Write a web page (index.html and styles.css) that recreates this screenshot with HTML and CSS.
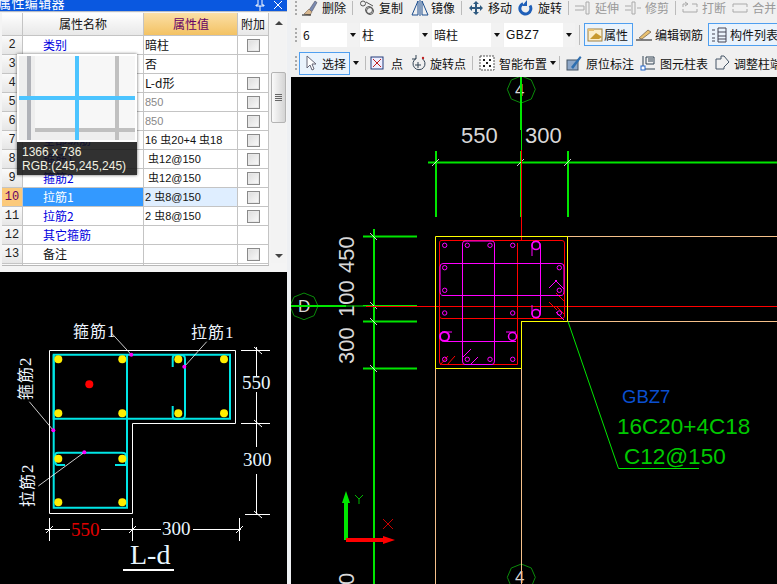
FILE: index.html
```html
<!DOCTYPE html>
<html lang="zh">
<head>
<meta charset="utf-8">
<title>属性编辑器</title>
<link rel="stylesheet" href="styles.css">
</head>
<body>
<div class="app">
  <aside class="left">
    <div class="titlebar"><span class="title">属性编辑器</span><span class="tb-icons"><svg width="10" height="11" viewBox="0 0 10 11"><path d="M3 0v5H1v1h8V5H7V0M5 6v5" fill="none" stroke="#fff"/></svg><svg width="10" height="10" viewBox="0 0 10 10"><path d="M1 1l8 8M9 1l-8 8" stroke="#fff" fill="none"/></svg></span></div>
    <div class="props">
      <div class="grid">
        <div class="row head"><div class="c num"></div><div class="c name center">属性名称</div><div class="c val hl">属性值</div><div class="c add center">附加</div></div>
        <div class="row"><div class="c num">2</div><div class="c name link">类别</div><div class="c val">暗柱</div><div class="c add"><i class="chk"></i></div></div>
        <div class="row"><div class="c num">3</div><div class="c name link">是否边缘构件</div><div class="c val">否</div><div class="c add"></div></div>
        <div class="row"><div class="c num">4</div><div class="c name link">截面形状</div><div class="c val">L-d形</div><div class="c add"><i class="chk"></i></div></div>
        <div class="row"><div class="c num">5</div><div class="c name link">截面宽</div><div class="c val mono dim">850</div><div class="c add"><i class="chk"></i></div></div>
        <div class="row"><div class="c num">6</div><div class="c name link">截面高</div><div class="c val mono dim">850</div><div class="c add"><i class="chk"></i></div></div>
        <div class="row"><div class="c num">7</div><div class="c name link">全部纵筋</div><div class="c val mono">16 虫20+4 虫18</div><div class="c add"><i class="chk"></i></div></div>
        <div class="row"><div class="c num">8</div><div class="c name link">箍筋1</div><div class="c val mono">&nbsp;虫12@150</div><div class="c add"><i class="chk"></i></div></div>
        <div class="row"><div class="c num">9</div><div class="c name link">箍筋2</div><div class="c val mono">&nbsp;虫12@150</div><div class="c add"><i class="chk"></i></div></div>
        <div class="row sel"><div class="c num">10</div><div class="c name">拉筋1</div><div class="c val mono">2 虫8@150</div><div class="c add"><i class="chk"></i></div></div>
        <div class="row"><div class="c num">11</div><div class="c name link">拉筋2</div><div class="c val mono">2 虫8@150</div><div class="c add"><i class="chk"></i></div></div>
        <div class="row"><div class="c num">12</div><div class="c name link">其它箍筋</div><div class="c val"></div><div class="c add"></div></div>
        <div class="row"><div class="c num">13</div><div class="c name">备注</div><div class="c val"></div><div class="c add"><i class="chk"></i></div></div>
        <div class="row stub"><div class="c num"></div><div class="c name"></div><div class="c val"></div><div class="c add"></div></div>
      </div>
      <div class="scroll">
        <svg class="sb-arrow" width="8" height="5" viewBox="0 0 8 5"><path d="M4 1l4 4H0z" fill="#444"/></svg>
        <div class="thumb"><span></span><span></span><span></span><span></span></div>
        <svg class="sb-arrow end" width="8" height="5" viewBox="0 0 8 5"><path d="M0 0h8L4 4z" fill="#444"/></svg>
      </div>
      <div class="tip">
        <svg class="tip-img" width="120" height="88" viewBox="0 0 120 88">
          <rect width="120" height="88" fill="#fff"/>
          <rect x="2" y="2" width="116" height="84" fill="#eee"/>
          <rect x="18" y="2" width="100" height="74" fill="#f7f7f7"/>
          <rect x="10" y="2" width="4" height="84" fill="#b0b2b8"/>
          <rect x="98" y="2" width="4" height="84" fill="#c0c0c0"/>
          <rect x="18" y="74" width="100" height="4" fill="#c0c0c0"/>
          <rect x="58" y="2" width="4" height="84" fill="#4cc4ff"/>
          <rect x="2" y="42" width="116" height="4" fill="#4cc4ff"/>
        </svg>
        <div class="tip-txt"><div>1366 x 736</div><div>RGB:(245,245,245)</div></div>
      </div>
    </div>
    <div class="preview">
      <svg class="fill" viewBox="0 272 287 312" width="287" height="312">
        <path d="M49.5 350.5H235.5V423.5H132.5V513.5H49.5Z" fill="none" stroke="#fff"/>
        <g fill="none" stroke="#00e6e6" stroke-width="2">
          <path d="M53.7 354.7H230V418.7H53.7Z"/>
          <path d="M53.7 354.7V507.7H127V354.7"/>
          <path d="M172.7 367V358Q172.7 355 176 355H181Q185 355 185 359V415Q185 419 181 419H176Q172.7 419 172.7 416V406"/>
          <path d="M65 465H58Q55 465 55 460V456Q55 452.7 58 452.7H122Q126 452.7 126 456V465H115"/>
        </g>
        <g fill="#ffee00">
          <circle cx="58.3" cy="359.3" r="4"/><circle cx="122.3" cy="359.3" r="4"/><circle cx="178.3" cy="359.3" r="4"/><circle cx="224" cy="359.3" r="4"/>
          <circle cx="58.3" cy="413.3" r="4"/><circle cx="122.3" cy="413.3" r="4"/><circle cx="178.3" cy="413.3" r="4"/><circle cx="224" cy="413.3" r="4"/>
          <circle cx="58.3" cy="458.7" r="4"/><circle cx="122.3" cy="458.7" r="4"/><circle cx="58.3" cy="502.3" r="4"/><circle cx="122.3" cy="502.3" r="4"/>
        </g>
        <circle cx="89.3" cy="384.3" r="4" fill="#f00"/>
        <g stroke="#fff" fill="none">
          <path d="M111.7 333.3L131.3 354.7M206.7 341.7L184.3 366.7M29.3 401.7L53.3 430.3M38.3 486L84.3 452.3" stroke-width=".8"/>
          <path d="M241 350.5H270M241 423.5H270M245 514.5H270M256.5 347V376M256.5 392V447M256.5 474V515"/>
          <path d="M45 529.5H70M101 529.5H161M193 529.5H241M49.5 518V541M132.5 518V541M239.5 518V541"/>
          <path d="M254 347l8 7M254 420l8 7M254 511l8 7M46 533l7-7M129 533l7-7M236 533l7-7"/>
        </g>
        <g fill="#ff00ff"><circle cx="131.3" cy="354.7" r="2"/><circle cx="184.3" cy="366.7" r="2"/><circle cx="53.3" cy="430.3" r="2"/><circle cx="84.3" cy="452.3" r="2"/></g>
        <g class="cad-label">
          <text x="73" y="337">箍筋<tspan class="lat">1</tspan></text>
          <text x="191" y="338">拉筋<tspan class="lat">1</tspan></text>
          <text transform="translate(31 400) rotate(-90)">箍筋<tspan class="lat">2</tspan></text>
          <text transform="translate(33 507) rotate(-90)">拉筋<tspan class="lat">2</tspan></text>
        </g>
        <g class="cad-num">
          <text x="242" y="389">550</text>
          <text x="243" y="466">300</text>
          <text x="71" y="536" class="red">550</text>
          <text x="162" y="535">300</text>
        </g>
        <text x="130" y="564" class="cad-title">L-d</text>
        <rect x="123" y="569" width="51" height="2" fill="#fff"/>
      </svg>
    </div>
  </aside>
  <div class="split"></div>
  <main class="right">
    <div class="bars">
      <div class="bar b1">
        <i class="grip"></i>
        <span class="tool"><svg class="ic" viewBox="0 0 16 16"><path d="M7 10l6-9 2 1.500-5 9z" fill="#7a8ab0" stroke="#445" stroke-width=".5"/><path d="M2 14l5-5 3 3-2 3z" fill="#d8b890" stroke="#654" stroke-width=".5"/><path d="M0 15h9" stroke="#111"/></svg>删除</span><i class="sep"></i>
        <span class="tool"><svg class="ic" viewBox="0 0 16 16" fill="none" stroke="#555"><circle cx="4" cy="3.500" r="2.500"/><circle cx="11" cy="11" r="3.500"/><circle cx="10" cy="10" r="3.500"/><path d="M7 2l7 4"/></svg>复制</span>
        <span class="tool mir"><svg class="ic wide" viewBox="0 0 18 16" fill="none" stroke="#1b4d8e"><path d="M7 15H1L7 1zM11 15h6L11 1zM9 0v16"/></svg>镜像</span><i class="sep"></i>
        <span class="tool"><svg class="ic" viewBox="0 0 16 16" fill="#2f5a80"><path d="M8 1l3 3H9v3h3V5l3 3-3 3V9H9v3h2l-3 3-3-3h2V9H4v2L1 8l3-3v2h3V4H5z"/></svg>移动</span>
        <span class="tool"><svg class="ic" viewBox="0 0 16 16" fill="none" stroke="#1f5fb8" stroke-width="3"><path d="M5 3.500a5.500 5.500 0 1 0 7 2"/><path d="M9 0v6H4z" fill="#1f5fb8" stroke="none"/></svg>旋转</span><i class="sep"></i>
        <span class="tool off"><svg class="ic" viewBox="0 0 16 16" fill="none" stroke="#aaa"><path d="M0 6h9M0 10h9v-4M11 2v12h3V2z"/></svg>延伸</span>
        <span class="tool off"><svg class="ic" viewBox="0 0 16 16" fill="none" stroke="#aaa"><path d="M0 6h6M0 10h6M7 2v12h3V2zM12 8h4"/></svg>修剪</span><i class="sep"></i>
        <span class="tool off"><svg class="ic" viewBox="0 0 16 16" fill="none" stroke="#aaa"><path d="M1 7V4h5M10 4h5v3M3 2l3 2-3 2M1 12h14v-3M1 12V9"/></svg>打断</span>
        <span class="tool off"><svg class="ic" viewBox="0 0 16 16" fill="none" stroke="#aaa"><path d="M1 7V4h14v3M1 12h14v-3M1 12V9"/></svg>合并</span>
      </div>
      <div class="bar b2">
        <i class="grip"></i>
        <span class="combo w58"><span>6</span><b class="drop"></b></span>
        <span class="combo"><span>柱</span><b class="drop"></b></span>
        <span class="combo"><span>暗柱</span><b class="drop"></b></span>
        <span class="combo"><span class="latin">GBZ7</span><b class="drop"></b></span>
        <i class="sep tall"></i>
        <span class="tool active attr"><svg class="ic" viewBox="0 0 16 16"><rect x="1" y="2" width="14" height="12" fill="#fbeecb" stroke="#a08040"/><path d="M3 12l6-6 6 4-3 2z" fill="#c89a30"/><path d="M1 2h6v2H1z" fill="#e8c070"/></svg>属性</span>
        <span class="tool"><svg class="ic" viewBox="0 0 16 16"><path d="M3 11l9-8 3 2-9 7z" fill="#e8c070" stroke="#543" stroke-width=".6"/><path d="M0 13h16" stroke="#111"/></svg>编辑钢筋</span>
        <span class="tool active list"><svg class="ic" viewBox="0 0 16 16" fill="none" stroke="#445"><path d="M1 3h3M1 7h3M1 11h3M1 14h3M7 1h8v14H7zM7 5h8M7 9h8M7 12h8"/></svg>构件列表</span>
      </div>
      <div class="bar b3">
        <i class="grip"></i>
        <span class="tool active pick"><svg class="ic" viewBox="0 0 16 16"><path d="M4 1v12l3-3 2 5 2-1-2-5h4z" fill="#fff" stroke="#667"/></svg>选择</span><b class="drop small"></b><i class="sep"></i>
        <span class="tool dot"><svg class="ic" viewBox="0 0 16 16"><rect x="2" y="2" width="12" height="12" fill="#eef" stroke="#223a7a"/><path d="M4 4l8 8M12 4l-8 8" stroke="#c02020"/></svg>点</span>
        <span class="tool"><svg class="ic" viewBox="0 0 16 16" fill="none" stroke="#345"><path d="M6 3.500a6 6 0 1 0 6 0M6 0v4H2M5 10h6M8 7v6"/><circle cx="13" cy="3" r="1.200" fill="#c02020" stroke="none"/></svg>旋转点</span><i class="sep"></i>
        <span class="tool"><svg class="ic" viewBox="0 0 16 16"><rect x="1" y="1" width="14" height="14" fill="#fff" stroke="#555" stroke-dasharray="2 1"/><path d="M4 4h2v2H4zM10 4h2v2h-2zM7 7h2v2H7zM4 10h2v2H4zM10 10h2v2h-2z" fill="#222"/></svg>智能布置<b class="drop small in"></b></span><i class="sep tight"></i>
        <span class="tool"><svg class="ic" viewBox="0 0 16 16"><rect x="1" y="5" width="11" height="10" fill="#8fa8c8" stroke="#456"/><path d="M5 12L14 1l1.500 1.500L7 14z" fill="#2f6fb0"/></svg>原位标注</span>
        <span class="tool"><svg class="ic" viewBox="0 0 16 16" fill="none" stroke="#345"><path d="M3 1v13h12M6 2h8v7H6zM8 4h5M8 6h5"/><rect x="1" y="11" width="4" height="4" fill="#fff" stroke="#2266cc"/></svg>图元柱表</span>
        <span class="tool"><svg class="ic" viewBox="0 0 16 16" fill="none" stroke="#456"><path d="M2 4h5V1h3l5 6-5 5v2H2z"/></svg>调整柱端</span>
      </div>
    </div>
    <div class="canvas">
      <svg class="fill" viewBox="291 77 486 507" width="486" height="507">
        <g fill="none" stroke="#0a8a0a" class="axis-ring">
          <path d="M521.3 76l10 4 4 9.300-4 9.700-10 4-10-4-4-9.700 4-9.300z"/>
          <path d="M304 293l10 4 4 9-4 9.700-10 4-10-4-4-9.700 4-9z"/>
          <path d="M521.300 564l10 4 4 9.300-4 9.700h-20l-4-9.700 4-9.300z"/>
        </g>
        <g class="cad-grey">
          <text x="515" y="96" class="t18">4</text>
          <text x="298" y="312" class="t18">D</text>
          <text x="515" y="583" class="t18">4</text>
          <text x="461" y="143">550</text>
          <text x="525" y="143">300</text>
          <text transform="translate(354 273) rotate(-90)">450</text>
          <text transform="translate(354 317) rotate(-90)">100</text>
          <text transform="translate(354 364) rotate(-90)">300</text>
          <text transform="translate(354 585) rotate(-90)">0</text>
        </g>
        <g fill="none" stroke="#00e600" stroke-width="2">
          <path d="M521 77V130M436 151V217M521 151V217M568 151V217M428 162.500H777"/>
          <path d="M374 229V584M363 236.500H417M363 321.500H417M363 368.500H417M291 306H346"/>
        </g>
        <path d="M521.500 130V150M346 306H366M363 305.500H417" fill="none" stroke="#00e600"/>
        <g stroke="#fff" fill="none" stroke-width=".8"><path d="M432 166l7-7M517 166l7-7M564 166l7-7M370 233l7 7M370 302l7 7M370 318l7 7M370 365l7 7"/></g>
        <path d="M521.500 150V240M366 306.500H777" fill="none" stroke="#f00"/>
        <path d="M567 236.500H777M567 321.500H777M435.500 368V584M521.500 321V584" fill="none" stroke="#f5c08a"/>
        <path d="M435.500 236.500H567.500V321.500H521.500V368.500H435.500Z" fill="none" stroke="#ffff00"/>
        <g fill="none" stroke="#f00">
          <path d="M441 240.500H562Q564.500 240.500 564.500 243V316Q564.500 318.500 562 318.500H442Q439.500 318.500 439.500 316V243Q439.500 240.500 441 240.500Z"/>
          <path d="M439.500 243V362Q439.500 364.500 442 364.500H517.500V243"/>
          <path d="M440 365l8-9M447 365l8-9M549 302l8 8M556 293l9 9M556 306l8 8"/>
        </g>
        <g fill="none" stroke="#f0f">
          <path d="M443 263.500H561Q564 263.500 564 267V291Q564 295.500 561 295.500H443Q440 295.500 440 291V267Q440 263.500 443 263.500Z"/>
          <path d="M465 241H492Q494.500 241 494.500 244V361Q494.500 364.500 492 364.500H465Q462.500 364.500 462.500 361V244Q462.500 241 465 241Z"/>
          <path d="M532 256V244Q532 241 536 241Q540.500 241 540.500 246V312Q540.500 318 536 318Q532 318 532 314V305" />
          <path d="M445 341.500H516M442 332H452M506 332H516"/>
          <path d="M549 288l8-8M555 280l9 9M463 357l8-8M471 364l7-7M556 312l8 8"/>
          <g>
            <circle cx="444.700" cy="245.300" r="2.200"/><circle cx="467.300" cy="245.300" r="2.200"/><circle cx="490" cy="245.300" r="2.200"/><circle cx="512.700" cy="245.300" r="2.200"/>
            <circle cx="444.700" cy="267.700" r="2.200"/><circle cx="559.300" cy="267.700" r="2.200"/><circle cx="444.700" cy="290.300" r="2.200"/><circle cx="559.300" cy="290.300" r="2.200"/>
            <circle cx="444.700" cy="313" r="2.200"/><circle cx="512.700" cy="313" r="2.200"/><circle cx="559.300" cy="313" r="2.200"/>
            <circle cx="444.700" cy="359.300" r="2.200"/><circle cx="467.300" cy="359.300" r="2.200"/><circle cx="490" cy="359.300" r="2.200"/><circle cx="512.700" cy="359.300" r="2.200"/>
            <circle cx="536" cy="245.500" r="4" stroke-width="1.600"/><circle cx="536" cy="313.500" r="4" stroke-width="1.600"/>
            <circle cx="444.500" cy="336.500" r="4.500" stroke-width="2"/><circle cx="512.500" cy="336.500" r="4" stroke-width="1.500"/>
          </g>
        </g>
        <path d="M568 321.500L618.500 468.500H699" fill="none" stroke="#00e600"/>
        <text x="622" y="403" class="lbl-blue">GBZ7</text>
        <text x="617" y="434" class="lbl-green">16C20+4C18</text>
        <text x="624" y="464" class="lbl-green">C12@150</text>
        <path d="M346 540V498" stroke="#00e600" stroke-width="4" fill="none"/>
        <path d="M346 491l4 12h-8z" fill="#00e600"/>
        <path d="M346 540H385" stroke="#f00" stroke-width="4" fill="none"/>
        <path d="M395 540l-12-4v8z" fill="#f00"/>
        <path d="M355 495l4 4 4-4M359 499v5" fill="none" stroke="#00e600" stroke-width=".8"/>
        <path d="M383 519l10 10M393 519l-10 10" fill="none" stroke="#f00" stroke-width=".8"/>
      </svg>
    </div>
  </main>
</div>
</body>
</html>
```
FILE: styles.css
```css
* { box-sizing: border-box; }
html, body { margin: 0; padding: 0; width: 777px; height: 584px; overflow: hidden; background: #f0f0f0; }
body { font: 12px "Noto Sans CJK SC", "Noto Sans", sans-serif; color: #111; }
.app { display: flex; width: 777px; height: 584px; }
.left { width: 287px; flex: none; display: flex; flex-direction: column; background: #fff; }
.split { width: 4px; flex: none; background: #eef0f3; }
.right { flex: 1; min-width: 0; display: flex; flex-direction: column; }
.fill { display: block; }

.titlebar { height: 11px; flex: none; background: #0a58e0; color: #fff; display: flex; justify-content: space-between; overflow: hidden; }
.title { font-size: 13px; line-height: 11px; margin-top: -3px; letter-spacing: .4px; margin-left: -2px; height: 14px; }
.tb-icons { display: flex; gap: 8px; padding-right: 4px; }
.props { position: relative; height: 261px; flex: none; border-top: 1px solid #b8bcc4; background: #f4f4f4; display: flex; padding: 1px 1px 0 2px; overflow: hidden; }
.grid { width: 267px; height: 253px; flex: none; background: #fff; overflow: hidden; border-bottom: 1px solid #b8b8b8; }
.row { display: flex; height: 19px; border-bottom: 1px solid #c4c4c4; line-height: 18px; font-size: 12px; }
.row.head { height: 23px; line-height: 22px; font-size: 12px; }
.row.stub { height: 3px; border: 0; }
.c { border-right: 1px solid #c4c4c4; overflow: hidden; white-space: nowrap; flex: none; }
.num { width: 21px; background: linear-gradient(#fafafa, #e6e6e6); text-align: center; font-family: "Liberation Mono", monospace; color: #222; }
.name { width: 121px; padding-left: 20px; }
.val { width: 94px; padding-left: 1px; }
.add { width: 31px; display: flex; align-items: center; justify-content: center; }
.center { text-align: center; padding-left: 0; justify-content: center; }
.head .c { background: linear-gradient(#fff, #e8e8e8); }
.head .hl { background: linear-gradient(#fbdfa6, #f3c263); color: #660066; text-align: center; }
.head .num { background: linear-gradient(#fff, #e8e8e8); }
.link { color: #0000e0; }
.mono { font-family: "Liberation Sans", "Noto Sans CJK SC", sans-serif; font-size: 11px; }
.dim { color: #888; }
.chk { display: block; width: 13px; height: 13px; border: 1px solid #8a8a8a; background: linear-gradient(135deg, #dcdcdc, #fafafa); box-shadow: inset 0 0 0 1px #e8e8e8; }
.sel .num { background: #fbc97a; color: #660066; }
.sel .name { background: #3399ff; color: #fff; }
.sel .val { background: #dfeeff; }

.scroll { width: 16px; margin-left: 2px; height: 250px; display: flex; flex-direction: column; align-items: center; padding: 7px 0 4px; background: #f3f3f3; }
.sb-arrow { flex: none; }
.sb-arrow.end { margin-top: auto; }
.thumb { width: 15px; height: 51px; flex: none; margin-top: 47px; border: 1px solid #b4b4b4; border-radius: 2px; background: linear-gradient(90deg, #fafafa, #d4d4d4); display: flex; flex-direction: column; align-items: center; justify-content: center; gap: 1px; }
.thumb span { display: block; width: 7px; height: 1px; background: #666; }

.tip { position: absolute; left: 17px; top: 42px; width: 120px; height: 121px; box-shadow: 0 0 3px rgba(0,0,0,.6); }
.tip-img { display: block; }
.tip-txt { height: 33px; background: rgba(20,20,20,.88); color: #f0f0e0; font: 12px/14px "Liberation Sans", sans-serif; padding: 3px 0 0 5px; }

.preview { flex: 1; margin-top: -1px; border-top: 1px solid #fff; background: #000; overflow: hidden; }
.cad-label text { font: 16px "Noto Sans CJK SC", sans-serif; fill: #eef6ff; letter-spacing: 1px; }
.cad-label .lat { font-family: "Liberation Serif", serif; font-size: 17px; }
.cad-num text { font: 19px "Liberation Serif", serif; fill: #e8f6ff; }
.cad-num .red { fill: #e00000; }
.cad-title { font: 28px "Liberation Serif", serif; fill: #e8f6ff; }

.bars { height: 77px; flex: none; background: #f0f0f0; display: flex; flex-direction: column; overflow: hidden; }
.bar { display: flex; align-items: center; gap: 7px; white-space: nowrap; padding-left: 4px; color: #111; flex: none; }
.b1 { height: 15px; margin-bottom: 7px; gap: 6px; }
.b2 { height: 25px; margin-bottom: 4px; gap: 1px; padding-left: 4px; }
.b3 { height: 24px; gap: 6px; padding-left: 4px; }
.grip { width: 2px; height: 14px; border-left: 2px dotted #aaa; flex: none; }
.b1 .grip { margin-right: -1px; }
.b2 .grip { margin-right: 3px; }
.b3 .grip { margin-right: -4px; }
.tool { display: inline-flex; align-items: center; gap: 4px; flex: none; height: 100%; }
.tool.off { color: #999; }
.mir { gap: 2px; margin-left: 2px; }
.ic { width: 16px; height: 16px; flex: none; }
.ic.wide { width: 18px; }
.sep { width: 1px; height: 14px; background: #bbb; flex: none; }
.sep.tall { height: 20px; margin: 0 3px; }
.sep.tight { margin-left: -3px; }
.combo { width: 71px; height: 24px; background: #fff; display: flex; align-items: center; justify-content: space-between; padding-left: 2px; flex: none; font-size: 12px; }
.w58 { width: 58px; }
.latin { font-family: "Liberation Sans", sans-serif; font-size: 12px; letter-spacing: .5px; }
.combo .drop { width: 12px; height: 100%; background: #f2f2f2; position: relative; }
.drop::after { content: ""; position: absolute; left: 50%; top: 50%; margin: -2px 0 0 -3px; border: 3px solid transparent; border-top: 4px solid #111; border-bottom: 0; }
.drop.small { position: relative; width: 7px; height: 10px; flex: none; margin-left: -4px; }
.drop.small.in { margin-left: -1px; width: 6px; }
.active { border: 1px solid #4f9ff0; background: #eaf3fc; padding: 0 3px; height: 23px; }
.b2 .tool { margin-right: 2px; gap: 3px; }
.b2 .tool.active { padding: 0 2px; }
.b2 .tool.attr { gap: 1px; padding-right: 4px; }
.b2 .tool.list { margin-left: 2px; }
.pick { gap: 3px; width: 51px; }
.dot { gap: 6px; margin-left: -3px; margin-right: 1px; }

.canvas { flex: 1; background: #000; overflow: hidden; }
.cad-grey text { font: 22px "Liberation Sans", sans-serif; fill: #d8d8d8; }
.cad-grey .t18 { font-size: 17px; }
.lbl-blue { font: 18.500px "Liberation Sans", sans-serif; fill: #0a4fd0; }
.lbl-green { font: 22.500px "Liberation Sans", sans-serif; fill: #00c800; }
```
